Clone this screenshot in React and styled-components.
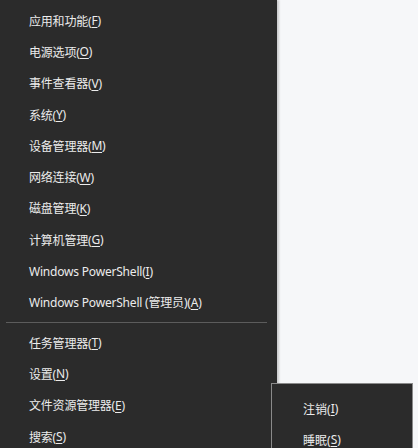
import styled, { createGlobalStyle } from "styled-components";

const GlobalStyle = createGlobalStyle`
  html, body {
    margin: 0;
    padding: 0;
    background: #f6f7f9;
  }
  body {
    font-family: "Segoe UI", "Noto Sans", "Noto Sans CJK SC", sans-serif;
  }
`;

const mainItems = [
  ["应用和功能", "F"],
  ["电源选项", "O"],
  ["事件查看器", "V"],
  ["系统", "Y"],
  ["设备管理器", "M"],
  ["网络连接", "W"],
  ["磁盘管理", "K"],
  ["计算机管理", "G"],
  ["Windows PowerShell", "I"],
  ["Windows PowerShell (管理员)", "A"],
];

const lowerItems = [
  ["任务管理器", "T"],
  ["设置", "N"],
  ["文件资源管理器", "E"],
  ["搜索", "S"],
];

const subItems = [
  ["注销", "I"],
  ["睡眠", "S"],
];

const Label = ({ text, hotkey }) => (
  <>
    {text}(<Key>{hotkey}</Key>)
  </>
);

const App = () => {
  return (
    <>
      <GlobalStyle />
      <Screen>
        <Menu>
          <Group>
            {mainItems.map(([text, key]) => (
              <Item key={text}>
                <Label text={text} hotkey={key} />
              </Item>
            ))}
          </Group>
          <Divider />
          <Group>
            {lowerItems.map(([text, key]) => (
              <Item key={text}>
                <Label text={text} hotkey={key} />
              </Item>
            ))}
          </Group>
        </Menu>
        <Desktop>
          <Flyout>
            {subItems.map(([text, key]) => (
              <SubItem key={text}>
                <Label text={text} hotkey={key} />
              </SubItem>
            ))}
          </Flyout>
        </Desktop>
      </Screen>
    </>
  );
};

const Screen = styled.div`
  display: flex;
  width: 418px;
  height: 448px;
  overflow: hidden;
  position: relative;
`;

const Menu = styled.div`
  width: 277px;
  flex-shrink: 0;
  background: #2b2b2b;
  padding-top: 5px;
  box-sizing: border-box;
  box-shadow: 2px 0 2px rgba(0, 0, 0, 0.18);
  z-index: 1;
`;

const Group = styled.div`
  display: flex;
  flex-direction: column;
`;

const Item = styled.div`
  height: 31.3px;
  display: flex;
  align-items: center;
  padding-left: 29px;
  color: #ececec;
  font-size: 12px;
  letter-spacing: -0.2px;
  white-space: nowrap;
`;

const Key = styled.span`
  text-decoration: underline;
  text-underline-offset: 2px;
`;

const Divider = styled.div`
  height: 1px;
  background: #5c5c5c;
  margin: 4px 10px 4px 6px;
`;

const Desktop = styled.div`
  flex: 1;
  background: #f6f7f9;
`;

const Flyout = styled.div`
  position: absolute;
  left: 271px;
  top: 383px;
  width: 142px;
  height: 80px;
  background: #2b2b2b;
  border-left: 1px solid #8a8a8a;
  border-top: 1px solid #8a8a8a;
  border-right: 1px solid #8a8a8a;
  box-sizing: border-box;
  padding-top: 9px;
  z-index: 2;
`;

const SubItem = styled.div`
  height: 31.3px;
  display: flex;
  align-items: center;
  padding-left: 31px;
  color: #ececec;
  font-size: 12px;
  white-space: nowrap;
`;

export default App;
